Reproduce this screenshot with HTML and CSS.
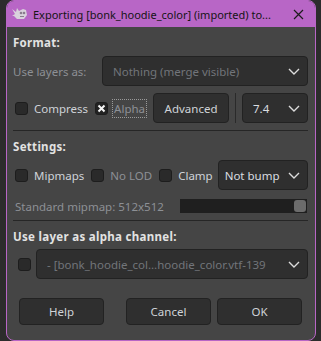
FILE: index.html
```html
<!DOCTYPE html>
<html lang="en">
<head>
  <meta charset="UTF-8">
  <title>Export dialog</title>
  <link rel="stylesheet" href="styles.css">
</head>
<body>

  <div class="window">

    <!-- Title bar -->
    <div class="titlebar">
      <svg class="app-icon" width="17" height="14" viewBox="0 0 17 14">
        <path d="M1 2 L5 5 L6 1 L8 4 L12 2 L15 3 L16 8 L13 12 L6 12 L3 9 L1 9 L4 7 Z" fill="#d9d2dc"/>
        <circle cx="10" cy="6" r="1.3" fill="#8a7d8e"/>
        <circle cx="13" cy="6" r="1.3" fill="#8a7d8e"/>
        <path d="M9 9.5 L13 9.5" stroke="#8a7d8e" stroke-width="1"/>
      </svg>
      <span class="title">Exporting [bonk_hoodie_color] (imported) to...</span>
      <svg class="close" width="11" height="11" viewBox="0 0 11 11">
        <path d="M1 1 L10 10 M10 1 L1 10" stroke="#1c1c1c" stroke-width="1.2"/>
      </svg>
    </div>

    <div class="content">

      <div class="heading">Format:</div>

      <div class="row row-layers">
        <span class="label">Use layers as:</span>
        <div class="combo combo-wide disabled">
          <span>Nothing (merge visible)</span>
          <svg class="chev" width="12" height="7" viewBox="0 0 12 7"><path d="M1 1 L6 6 L11 1" fill="none" stroke="#dcdcdc" stroke-width="1.4"/></svg>
        </div>
      </div>

      <div class="row row-format">
        <label class="check"><span class="box"></span><span>Compress</span></label>
        <label class="check check-alpha"><span class="box checked"><svg width="9" height="9" viewBox="0 0 9 9"><path d="M1.5 1.5 L7.5 7.5 M7.5 1.5 L1.5 7.5" stroke="#f4f4f4" stroke-width="2"/></svg></span><span class="focus">Alpha</span></label>
        <button class="btn btn-advanced">Advanced</button>
        <span class="vsep"></span>
        <div class="combo combo-version">
          <span>7.4</span>
          <svg class="chev" width="12" height="7" viewBox="0 0 12 7"><path d="M1 1 L6 6 L11 1" fill="none" stroke="#dcdcdc" stroke-width="1.4"/></svg>
        </div>
      </div>

      <div class="hsep"></div>

      <div class="heading">Settings:</div>

      <div class="row row-settings">
        <label class="check"><span class="box"></span><span>Mipmaps</span></label>
        <label class="check muted"><span class="box"></span><span>No LOD</span></label>
        <label class="check"><span class="box"></span><span>Clamp</span></label>
        <div class="combo combo-bump">
          <span>Not bump</span>
          <svg class="chev" width="12" height="7" viewBox="0 0 12 7"><path d="M1 1 L6 6 L11 1" fill="none" stroke="#dcdcdc" stroke-width="1.4"/></svg>
        </div>
      </div>

      <div class="row row-mipmap">
        <span class="muted-label">Standard mipmap: 512x512</span>
        <div class="slider"><span class="handle"></span></div>
      </div>

      <div class="hsep"></div>

      <div class="heading">Use layer as alpha channel:</div>

      <div class="row row-alpha">
        <span class="box box-alpha"></span>
        <div class="combo combo-layer disabled">
          <span>- [bonk_hoodie_col...hoodie_color.vtf-139</span>
          <svg class="chev" width="12" height="7" viewBox="0 0 12 7"><path d="M1 1 L6 6 L11 1" fill="none" stroke="#dcdcdc" stroke-width="1.4"/></svg>
        </div>
      </div>

      <div class="buttons">
        <button class="btn btn-action">Help</button>
        <button class="btn btn-action btn-cancel">Cancel</button>
        <button class="btn btn-action">OK</button>
      </div>

    </div>
  </div>

</body>
</html>
```

FILE: styles.css
```css
body {
  margin: 0;
  background: #2c2c2c;
  font-family: 'Noto Sans', 'Open Sans', sans-serif;
  font-size: 11.5px;
  color: #cfd3d8;
}

.window {
  margin-left: 6px;
  width: 308px;
  height: 339px;
  border: 1px solid #b866c6;
  border-radius: 8px;
  background: #454545;
  overflow: hidden;
}

/* Title bar */
.titlebar {
  height: 26px;
  background: #b866c6;
  display: flex;
  align-items: center;
  padding-left: 4px;
}

.app-icon {
  margin-right: 5px;
}

.title {
  color: #151515;
  font-size: 11px;
  white-space: nowrap;
}

.close {
  margin-left: auto;
  margin-right: 11px;
}

.content {
  padding: 6px 7px 0 6px;
}

.heading {
  font-weight: bold;
  color: #e2e2e2;
  letter-spacing: 0.3px;
  height: 16px;
  line-height: 16px;
  margin-top: 2px;
}

.row {
  display: flex;
  align-items: center;
}

.row-layers {
  margin-top: 5px;
  height: 30px;
}

.label {
  color: #8d9095;
  width: 89px;
}

.combo {
  box-sizing: border-box;
  height: 30px;
  background: #2f2f2f;
  border: 1px solid #222;
  border-radius: 4px;
  display: flex;
  align-items: center;
  justify-content: space-between;
  padding: 0 7px 0 10px;
  color: #dadde0;
  white-space: nowrap;
  overflow: hidden;
}

.combo.disabled {
  color: #72757a;
}

.combo-wide {
  flex: 1;
}

.row-format {
  margin-top: 7px;
  height: 30px;
}

.check {
  display: flex;
  align-items: center;
  gap: 6px;
  margin-left: 2px;
  margin-right: 5px;
}

.box {
  box-sizing: border-box;
  width: 13px;
  height: 13px;
  background: #2a2a2a;
  border: 1px solid #1d1d1d;
  border-radius: 3px;
  display: inline-flex;
  align-items: center;
  justify-content: center;
}

.box.checked {
  background: #222;
}

.check-alpha {
  gap: 4px;
  margin-right: 6px;
}

.focus {
  border: 1px dotted #9a9a9a;
  padding: 1px 1px;
  color: #8d9095;
}

.btn {
  box-sizing: border-box;
  height: 30px;
  background: #2f2f2f;
  border: 1px solid #222;
  border-radius: 4px;
  color: #cfd3d8;
  font-family: inherit;
  font-size: 11.5px;
  padding: 0;
}

.btn-advanced {
  width: 76px;
}

.vsep {
  width: 1px;
  height: 30px;
  background: #2a2a2a;
  margin: 0 6px 0 6px;
}

.combo-version {
  flex: 1;
}

.hsep {
  height: 1px;
  background: #262626;
  margin-top: 7px;
  margin-bottom: 8px;
}

.row-settings {
  margin-top: 5px;
  height: 30px;
}

.muted span:last-child {
  color: #8d9095;
}

.combo-bump {
  flex: 1;
  margin-left: 0;
  padding-left: 6px;
}

.row-mipmap {
  margin-top: 9px;
  height: 14px;
  padding-left: 2px;
}

.muted-label {
  color: #8d9095;
  width: 165px;
  white-space: nowrap;
}

.slider {
  flex: 1;
  height: 14px;
  background: #1f1f1f;
  margin-right: 1px;
  display: flex;
  justify-content: flex-end;
  align-items: center;
}

.handle {
  width: 12px;
  height: 12px;
  background: #6c6c6c;
  border-radius: 3px;
  margin-right: 1px;
}

.row-alpha {
  margin-top: 4px;
  height: 30px;
}

.box-alpha {
  margin-left: 5px;
  margin-right: 5px;
}

.combo-layer {
  flex: 1;
}

.buttons {
  display: flex;
  margin-top: 19px;
  padding-left: 6px;
}

.btn-action {
  width: 85px;
  height: 27px;
}

.btn-cancel {
  margin-left: 22px;
  margin-right: 6px;
}
```
